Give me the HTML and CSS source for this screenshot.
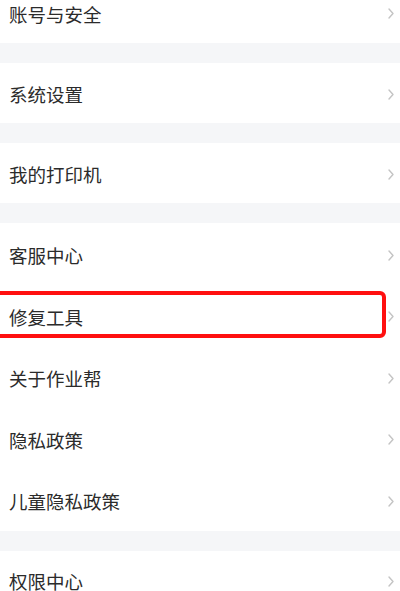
FILE: index.html
```html
<!DOCTYPE html>
<html lang="zh-CN">
<head>
<meta charset="utf-8">
<title>设置</title>
<link rel="stylesheet" href="styles.css">
</head>
<body>
<div class="page">
  <div class="group first">
    <div class="row"><span class="label">账号与安全</span><svg class="chev" viewBox="0 0 6 11"><path d="M1 1 L5 5.5 L1 10" /></svg></div>
  </div>
  <div class="group">
    <div class="row short"><span class="label">系统设置</span><svg class="chev" viewBox="0 0 6 11"><path d="M1 1 L5 5.5 L1 10" /></svg></div>
  </div>
  <div class="group">
    <div class="row short"><span class="label">我的打印机</span><svg class="chev" viewBox="0 0 6 11"><path d="M1 1 L5 5.5 L1 10" /></svg></div>
  </div>
  <div class="group">
    <div class="row"><span class="label">客服中心</span><svg class="chev" viewBox="0 0 6 11"><path d="M1 1 L5 5.5 L1 10" /></svg></div>
    <div class="row"><span class="label">修复工具</span><svg class="chev" viewBox="0 0 6 11"><path d="M1 1 L5 5.5 L1 10" /></svg><span class="highlight"></span></div>
    <div class="row"><span class="label">关于作业帮</span><svg class="chev" viewBox="0 0 6 11"><path d="M1 1 L5 5.5 L1 10" /></svg></div>
    <div class="row"><span class="label">隐私政策</span><svg class="chev" viewBox="0 0 6 11"><path d="M1 1 L5 5.5 L1 10" /></svg></div>
    <div class="row"><span class="label">儿童隐私政策</span><svg class="chev" viewBox="0 0 6 11"><path d="M1 1 L5 5.5 L1 10" /></svg></div>
  </div>
  <div class="group last">
    <div class="row tail"><span class="label">权限中心</span><svg class="chev" viewBox="0 0 6 11"><path d="M1 1 L5 5.5 L1 10" /></svg></div>
  </div>
</div>
</body>
</html>
```
FILE: styles.css
```css
html, body {
  margin: 0;
  padding: 0;
  background: #f5f6f8;
  overflow: hidden;
}
.page {
  width: 400px;
  height: 591px;
  overflow: hidden;
  display: flex;
  flex-direction: column;
  gap: 20px;
  font-family: "Noto Sans CJK SC", "Noto Sans", sans-serif;
}
.group {
  background: #ffffff;
  display: flex;
  flex-direction: column;
  flex-shrink: 0;
}
.group.first {
  margin-top: -18.5px;
}
.row {
  position: relative;
  height: 61.5px;
  box-sizing: border-box;
  padding: 3px 6px 0 9px;
  display: flex;
  align-items: center;
  justify-content: space-between;
  flex-shrink: 0;
}
.row.short {
  height: 60px;
}
.row.tail {
  padding-top: 0;
}
.label {
  font-size: 18.5px;
  color: #2b2b2b;
  line-height: 1;
}
.chev {
  width: 6px;
  height: 11px;
  fill: none;
  stroke: #c4c4c4;
  stroke-width: 1.4;
  stroke-linecap: round;
  stroke-linejoin: round;
}
.highlight {
  position: absolute;
  left: -10px;
  top: 6.5px;
  width: 396px;
  height: 47px;
  box-sizing: border-box;
  border: 4px solid #ff1010;
  border-radius: 6px;
}
```
